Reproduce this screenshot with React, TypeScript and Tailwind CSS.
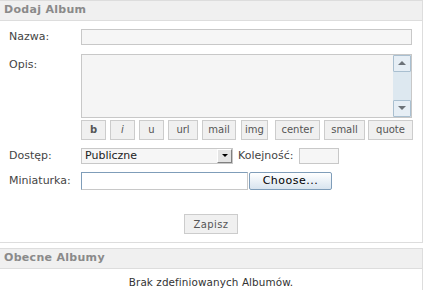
import React from "react";

const bbButtons: { label: string; cls: string }[] = [
  { label: "b", cls: "w-[25px] font-bold text-[#333]" },
  { label: "i", cls: "w-[25px] ml-[4px] italic" },
  { label: "u", cls: "w-[25px] ml-[4px]" },
  { label: "url", cls: "w-[30px] ml-[4px]" },
  { label: "mail", cls: "w-[34px] ml-[4px]" },
  { label: "img", cls: "w-[27px] ml-[5px]" },
  { label: "center", cls: "w-[45px] ml-[7px]" },
  { label: "small", cls: "w-[41px] ml-[4px]" },
  { label: "quote", cls: "w-[45px] ml-[3px]" },
];

const PanelHeader: React.FC<{ title: string }> = ({ title }) => (
  <div className="h-[21px] bg-[#f0f0f0] border-t border-b border-[#dddddd] pl-[4px] flex items-center text-[11px] font-bold text-[#8a8a8a] tracking-[0.3px]">
    {title}
  </div>
);

const Label: React.FC<{ children: React.ReactNode; top?: boolean }> = ({ children, top }) => (
  <div className={"w-[81px] shrink-0 pl-[9px] text-[11px] text-[#444]" + (top ? " pt-[3px]" : "")}>{children}</div>
);

export default function App() {
  return (
    <div className="w-[425px] h-[290px] bg-white font-['DejaVu_Sans',Verdana,sans-serif] overflow-hidden">
      {/* Dodaj Album */}
      <div className="w-[423px] h-[243px] border-r border-b border-[#dddddd] flex flex-col">
        <PanelHeader title="Dodaj Album" />

        <div className="flex items-center mt-[8px]">
          <Label>Nazwa:</Label>
          <div className="w-[331px] h-[16px] border border-[#c8c8c8] bg-[#f6f6f6]" />
        </div>

        <div className="flex mt-[8px]">
          <Label top>Opis:</Label>
          <div className="flex flex-col">
            <div className="w-[331px] h-[64px] border border-[#c8c8c8] bg-[#f5f5f5] flex justify-end">
              <div className="w-[18px] h-full bg-[#dde8f0] flex flex-col justify-between">
                <div className="h-[17px] border border-[#a9bfd0] rounded-[1px] bg-[#e6eef5] flex items-center justify-center">
                  <div className="w-0 h-0 border-l-[4px] border-r-[4px] border-b-[4px] border-l-transparent border-r-transparent border-b-[#6c7278]" />
                </div>
                <div className="h-[17px] border border-[#a9bfd0] rounded-[1px] bg-[#e6eef5] flex items-center justify-center">
                  <div className="w-0 h-0 border-l-[4px] border-r-[4px] border-t-[4px] border-l-transparent border-r-transparent border-t-[#6c7278]" />
                </div>
              </div>
            </div>
            <div className="flex mt-[2px]">
              {bbButtons.map((b) => (
                <div
                  key={b.label}
                  className={
                    "h-[20px] shrink-0 border border-[#cccccc] bg-[#f0f0f0] flex items-center justify-center text-[10px] text-[#555] " +
                    b.cls
                  }
                >
                  {b.label}
                </div>
              ))}
            </div>
          </div>
        </div>

        <div className="flex items-center mt-[8px]">
          <Label>Dostęp:</Label>
          <div className="w-[152px] h-[16px] border border-[#c8c8c8] bg-[#f6f6f6] flex items-center justify-between">
            <span className="pl-[3px] text-[11px] text-[#222] leading-none">Publiczne</span>
            <div className="w-[15px] h-[14px] bg-[#e4e4e4] border-t border-l border-t-white border-l-white border-r border-b border-r-[#808080] border-b-[#808080] flex items-center justify-center">
              <div className="w-0 h-0 border-l-[3px] border-r-[3px] border-t-[3px] border-l-transparent border-r-transparent border-t-black" />
            </div>
          </div>
          <span className="ml-[5px] text-[11px] text-[#444]">Kolejność:</span>
          <div className="ml-[6px] w-[40px] h-[16px] border border-[#c8c8c8] bg-[#f6f6f6]" />
        </div>

        <div className="flex items-center mt-[8px]">
          <Label>Miniaturka:</Label>
          <div className="w-[167px] h-[18px] border border-[#c8c8c8] border-l-[#7f9db9] border-t-[#7f9db9] bg-white" />
          <div className="ml-[1px] w-[83px] h-[18px] border border-[#7f9db9] rounded-[2px] bg-[linear-gradient(#ffffff,#d8e4ef)] flex items-center justify-center text-[11px] text-black tracking-[0.5px]">
            Choose...
          </div>
        </div>

        <div className="flex justify-center mt-[24px]">
          <div className="w-[54px] h-[20px] border border-[#cccccc] bg-[#f0f0f0] flex items-center justify-center text-[10px] text-[#555] tracking-[0.4px]">
            Zapisz
          </div>
        </div>
      </div>

      {/* Obecne Albumy */}
      <div className="w-[423px] mt-[5px] border-r border-[#dddddd] h-[50px]">
        <PanelHeader title="Obecne Albumy" />
        <div className="text-center text-[10.4px] text-[#333] pt-[6px] tracking-[0.1px]">Brak zdefiniowanych Albumów.</div>
      </div>
    </div>
  );
}
